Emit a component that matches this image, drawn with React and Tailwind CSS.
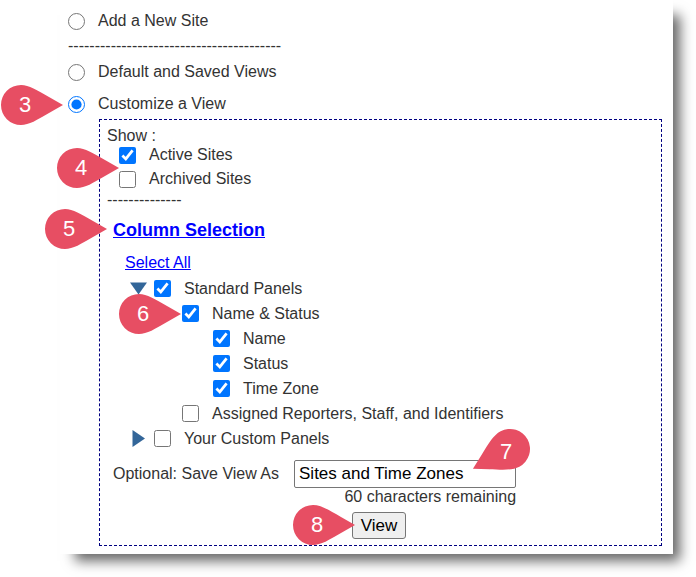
import { useState } from "react";

const MAX_NAME = 77;

// Numbered teardrop, the tip points right unless rotated
function Callout({ number, className, shapeClass = "", numberClass = "pl-2" }) {
  return (
    <span className={`absolute z-10 w-10 h-10 pointer-events-none ${className}`}>
      <svg viewBox="0 0 40 40" className={`absolute inset-0 w-10 h-10 overflow-visible ${shapeClass}`} aria-hidden="true">
        <path
          d="M62 20 L48 28 C36 35 28 40 20 40 A20 20 0 0 1 20 0 C28 0 36 5 48 12 Z"
          fill="#e74e63"
        />
      </svg>
      <span className={`relative flex w-10 h-10 items-center justify-center text-[22px] leading-none text-white ${numberClass}`}>
        {number}
      </span>
    </span>
  );
}

function Choice({ type = "checkbox", id, name, label, checked, onChange, className = "", children }) {
  return (
    <div className={`flex items-center ${className}`}>
      <span className="relative flex">
        {children}
        <input
          type={type}
          id={id}
          name={name}
          checked={checked}
          onChange={onChange}
          className="w-[17px] h-[17px] shrink-0"
        />
      </span>
      <label htmlFor={id} className="pl-[13px]">{label}</label>
    </div>
  );
}

function Toggle({ open, label, onClick }) {
  return (
    <button type="button" aria-label={label} aria-expanded={open} onClick={onClick} className="w-6 h-[17px] shrink-0">
      <svg viewBox="0 0 24 17" className="w-6 h-[17px]" aria-hidden="true">
        {open ? (
          <path d="M0 2.5 H17 L8.5 14.5 Z" fill="#336699" />
        ) : (
          <path d="M2.5 0 V17 L15 8.5 Z" fill="#336699" />
        )}
      </svg>
    </button>
  );
}

export default function App() {
  const [mode, setMode] = useState("customize");
  const [viewName, setViewName] = useState("Sites and Time Zones");
  const [standardOpen, setStandardOpen] = useState(true);
  const [customOpen, setCustomOpen] = useState(false);
  const [checked, setChecked] = useState({
    active: true,
    archived: false,
    standard: true,
    nameStatus: true,
    name: true,
    status: true,
    timeZone: true,
    assigned: false,
    custom: false,
  });

  const box = (key) => ({
    id: key,
    checked: checked[key],
    onChange: () => setChecked({ ...checked, [key]: !checked[key] }),
  });

  const radio = (key) => ({
    type: "radio",
    name: "mode",
    id: `mode-${key}`,
    checked: mode === key,
    onChange: () => setMode(key),
  });

  const selectAll = (e) => {
    e.preventDefault();
    setChecked({ ...checked, standard: true, nameStatus: true, name: true, status: true, timeZone: true, assigned: true, custom: true });
  };

  return (
    <div className="bg-white pb-6 font-['Liberation_Sans',Arial,sans-serif] text-base leading-6 text-[#333]">
      <form
        onSubmit={(e) => e.preventDefault()}
        className="ml-15 mr-[23px] bg-white pt-2 pb-2 pl-2 pr-[11px] shadow-[11px_11px_12px_-4px_rgba(0,0,0,0.6)]"
      >
        <Choice {...radio("add")} label="Add a New Site" className="h-[26px]" />
        <div className="h-[26px]" aria-hidden="true">----------------------------------------</div>
        <Choice {...radio("saved")} label="Default and Saved Views" className="h-6" />
        <Choice {...radio("customize")} label="Customize a View" className="mt-2 h-6">
          <Callout number={3} className="-left-[67px] -top-[11px]" />
        </Choice>

        <div className="mt-[3px] ml-[31px] border border-dashed border-[#000080] pt-1 pb-1.5">
          <div className="pl-[7px]">
            <div className="h-[19px]">Show :</div>
            <Choice {...box("active")} label="Active Sites" className="h-6 pl-3" />
            <Choice {...box("archived")} label="Archived Sites" className="h-6 pl-3">
              <Callout number={4} className="-left-[62px] -top-[23px]" />
            </Choice>
            <div className="h-5 leading-[18px]" aria-hidden="true">--------------</div>
          </div>

          <div className="pl-[13px]">
            <div className="relative mt-[5px] h-7 leading-7">
              <Callout number={5} className="-left-[68px] -top-[7px]" />
              <a href="#columns" className="text-lg font-bold leading-7 text-[#0000ff] underline">Column Selection</a>
            </div>
            <div className="mt-[7px] h-[25px] pl-3">
              <a href="#select-all" onClick={selectAll} className="text-[#0000ff] underline">Select All</a>
            </div>

            <div className="pl-[17px]">
              <div className="flex h-[25px] items-center">
                <Toggle open={standardOpen} label="Toggle Standard Panels" onClick={() => setStandardOpen(!standardOpen)} />
                <Choice {...box("standard")} label="Standard Panels" />
              </div>
              {standardOpen && (
                <div className="pl-[52px]">
                  <Choice {...box("nameStatus")} label="Name & Status" className="h-[25px]">
                    <Callout number={6} className="-left-[63px] -top-[11px]" />
                  </Choice>
                  <div className="pl-[31px]">
                    <Choice {...box("name")} label="Name" className="h-[25px]" />
                    <Choice {...box("status")} label="Status" className="h-[25px]" />
                    <Choice {...box("timeZone")} label="Time Zone" className="h-[25px]" />
                  </div>
                  <Choice {...box("assigned")} label="Assigned Reporters, Staff, and Identifiers" className="h-[25px]" />
                </div>
              )}
              <div className="flex h-[25px] items-center">
                <Toggle open={customOpen} label="Toggle Your Custom Panels" onClick={() => setCustomOpen(!customOpen)} />
                <Choice {...box("custom")} label="Your Custom Panels" />
              </div>
            </div>

            <div className="mt-[9px] flex w-fit flex-col">
              <div className="flex items-center">
                <label htmlFor="view-name" className="pr-[15px]">Optional: Save View As</label>
                <div className="relative">
                  <input
                    id="view-name"
                    type="text"
                    maxLength={MAX_NAME}
                    value={viewName}
                    onChange={(e) => setViewName(e.target.value)}
                    className="block h-7 w-[222px] rounded-xs border border-[#767676] bg-white px-1 text-[17px] text-black"
                  />
                  <Callout number={7} className="-right-3.5 -top-[31px]" shapeClass="rotate-152" numberClass="pr-2 pt-1.5" />
                </div>
              </div>
              <div className="h-[18px] text-right leading-[18px]">60 characters remaining</div>
              <div className="mt-1.5 flex justify-end pr-[110px]">
                <div className="relative">
                  <Callout number={8} className="-left-[59px] -top-[7px]" />
                  <button type="submit" className="block h-[27px] w-[54px] rounded-[3px] border border-[#767676] bg-[#efefef] text-[17px] leading-6 text-black">
                    View
                  </button>
                </div>
              </div>
            </div>
          </div>
        </div>
      </form>
    </div>
  );
}
